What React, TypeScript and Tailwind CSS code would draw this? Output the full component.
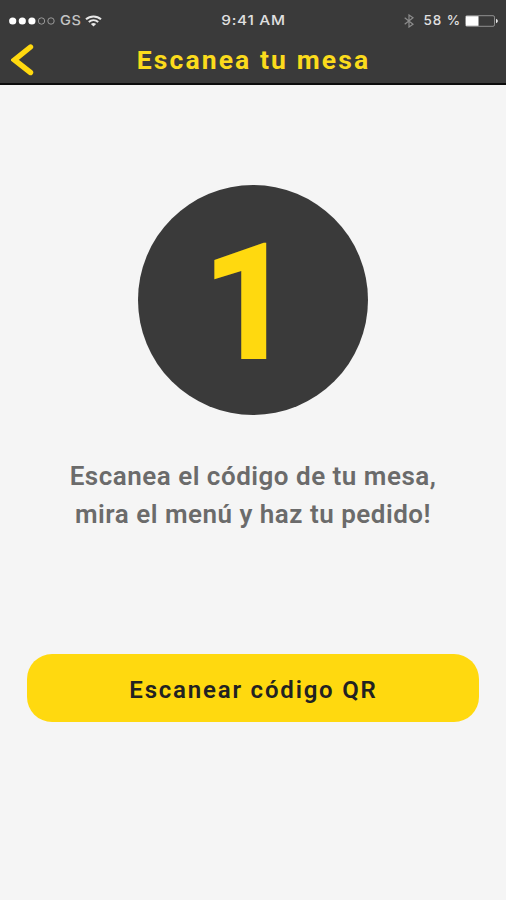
import React from "react";

const StatusBar: React.FC = () => {
  return (
    <div className="grid h-10 grid-cols-3 items-center pt-px pl-[9px] pr-[8px] font-['Inter',sans-serif] text-[13.5px] leading-none text-[#e0e0e0]">
      {/* Signal, carrier and wifi */}
      <div className="flex items-center">
        <svg width="46" height="8" viewBox="0 0 46 8" fill="none">
          <circle cx="3.7" cy="4" r="3.6" fill="#fff" />
          <circle cx="13.3" cy="4" r="3.6" fill="#fff" />
          <circle cx="22.9" cy="4" r="3.6" fill="#fff" />
          <circle cx="32.5" cy="4" r="3.2" stroke="#a5a5a5" strokeWidth="0.9" />
          <circle cx="42" cy="4" r="3.2" stroke="#a5a5a5" strokeWidth="0.9" />
        </svg>
        <span className="ml-[5px] origin-left scale-x-108 font-medium tracking-[0.6px] text-[#c4c4c4]">GS</span>
        <svg className="ml-[5px]" width="17" height="12" viewBox="0 0 17 12" fill="none" stroke="#e8e8e8">
          <path d="M1 4.3C5.2 0.4 11.8 0.4 16 4.3" strokeWidth="2" />
          <path d="M3.8 7C6.5 4.6 10.5 4.6 13.2 7" strokeWidth="2" />
          <path d="M8.5 11.6L5.9 9C7.4 7.7 9.6 7.7 11.1 9Z" fill="#e8e8e8" stroke="none" />
        </svg>
      </div>

      <span className="scale-x-114 text-center font-medium tracking-[0.6px]">9:41 AM</span>

      {/* Bluetooth and battery */}
      <div className="flex items-center justify-end">
        <svg width="10" height="14" viewBox="0 0 10 14" fill="none" stroke="#8c8c8c" strokeWidth="1.2">
          <path d="M0.7 3.7L9 10.2L5 13V1L9 3.8L0.7 10.3" />
        </svg>
        <span className="ml-[10px] font-medium whitespace-pre tracking-[0.9px]">58 %</span>
        <svg className="ml-[4px]" width="33" height="12" viewBox="0 0 33 12" fill="none">
          <rect x="0.5" y="0.7" width="29" height="10.6" rx="1.5" stroke="#8f8f8f" />
          <rect x="1" y="1.2" width="12.5" height="9.6" fill="#fff" />
          <path d="M31 3.8C33.4 4.6 33.4 7.4 31 8.2Z" fill="#e8e8e8" />
        </svg>
      </div>
    </div>
  );
};

const Header: React.FC = () => {
  return (
    <header className="h-[85px] border-b-2 border-[#0c0c0c] bg-[#3a3a3a]">
      <StatusBar />
      <div className="grid h-10 grid-cols-[60px_1fr_60px] items-center">
        <button aria-label="Volver" className="pl-[11px]">
          <svg width="24" height="32" viewBox="0 0 24 32" fill="none">
            <path d="M19.5 3L3.5 16L19.5 28.5" stroke="#ffd90f" strokeWidth="5.4" strokeLinecap="round" />
          </svg>
        </button>
        <h1 className="pl-px text-center text-[26.5px] leading-10 font-bold tracking-[2.1px] whitespace-nowrap text-[#fbdb1c]">
          Escanea tu mesa
        </h1>
      </div>
    </header>
  );
};

const App: React.FC = () => {
  return (
    <div className="flex min-h-screen flex-col bg-[#f5f5f5] font-['Roboto',sans-serif]">
      <Header />

      <main className="flex flex-col items-center px-[27px] pt-[100px]">
        {/* Step number */}
        <div className="flex size-[230px] items-center justify-center rounded-full bg-[#3a3a3a] pt-[7px] pr-[10px]">
          <span className="text-[163px] leading-none font-extrabold text-[#ffd90f]">1</span>
        </div>

        <p className="mt-[42px] text-center text-[26px] leading-[38px] font-semibold tracking-[0.5px] whitespace-nowrap text-[#6b6b6b]">
          Escanea el código de tu mesa,
          <br />
          mira el menú y haz tu pedido!
        </p>

        <button className="mt-[121px] h-[68px] w-full rounded-[25px] bg-[#ffd90f] pt-[3px] pl-px text-[24px] font-semibold tracking-[1.8px] text-[#222]">
          Escanear código QR
        </button>
      </main>
    </div>
  );
};

export default App;
